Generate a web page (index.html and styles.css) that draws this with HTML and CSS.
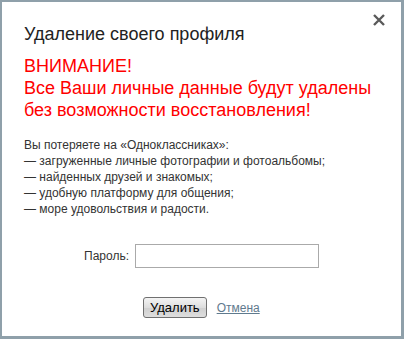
FILE: index.html
```html
<!DOCTYPE html>
<html lang="ru">
<head>
<meta charset="utf-8">
<link rel="stylesheet" href="styles.css">
</head>
<body>
<div class="dialog">
  <button class="close" aria-label="Закрыть">
    <svg width="12" height="12" viewBox="0 0 12 12"><path d="M1 1L11 11M11 1L1 11" stroke="#5a5a5a" stroke-width="2.4" stroke-linecap="butt"/></svg>
  </button>
  <h1 class="title">Удаление своего профиля</h1>
  <div class="warning">
    <div>ВНИМАНИЕ!</div>
    <div>Все Ваши личные данные будут удалены</div>
    <div>без возможности восстановления!</div>
  </div>
  <div class="info">
    <div>Вы потеряете на «Одноклассниках»:</div>
    <div>— загруженные личные фотографии и фотоальбомы;</div>
    <div>— найденных друзей и знакомых;</div>
    <div>— удобную платформу для общения;</div>
    <div>— море удовольствия и радости.</div>
  </div>
  <div class="pass-row">
    <label class="pass-label" for="pw">Пароль:</label>
    <input class="pass-input" id="pw" type="password">
  </div>
  <div class="actions">
    <button class="btn">Удалить</button>
    <a class="cancel" href="#">Отмена</a>
  </div>
</div>
</body>
</html>
```
FILE: styles.css
```css
html, body { margin: 0; padding: 0; background: #fff; }
body { font-family: "Liberation Sans", Arial, sans-serif; }
.dialog {
  position: relative;
  width: 399px;
  height: 334px;
  border: 2px solid #8fa0aa;
  border-right-width: 3px;
  border-bottom-width: 3px;
  background: #fff;
  box-sizing: content-box;
  padding: 0;
}
.close {
  position: absolute;
  top: 12px;
  right: 16px;
  border: 0;
  background: none;
  padding: 0;
  width: 12px;
  height: 12px;
  display: block;
}
.close svg { display: block; }
.title {
  margin: 0;
  padding: 21px 0 0 22px;
  font-size: 18px;
  font-weight: normal;
  color: #222;
  line-height: 22px;
}
.warning {
  margin-top: 10px;
  padding-left: 22px;
  color: #ff0000;
  font-size: 18px;
  line-height: 22px;
}
.info {
  margin-top: 16px;
  padding-left: 22px;
  color: #333;
  font-size: 12px;
  line-height: 16px;
}
.pass-row {
  margin-top: 27px;
  display: flex;
  align-items: center;
  padding-left: 82px;
  gap: 6px;
}
.pass-label { font-size: 12px; color: #333; }
.pass-input {
  width: 180px;
  height: 20px;
  border: 1px solid #aaa;
  padding: 1px;
  margin: 0;
  box-sizing: content-box;
}
.actions {
  margin-top: 29px;
  display: flex;
  align-items: center;
  padding-left: 141px;
  gap: 10px;
}
.btn {
  font-family: "Liberation Sans", Arial, sans-serif;
  font-size: 13px;
  height: 21px;
  padding: 0 6px;
  border: 1px solid #707070;
  border-radius: 3px;
  background: linear-gradient(#f4f4f4, #dddddd 50%, #cfcfcf 50%, #dedede);
  color: #000;
}
.cancel {
  font-size: 12px;
  color: #5f7a8e;
  text-decoration: underline;
}
```
